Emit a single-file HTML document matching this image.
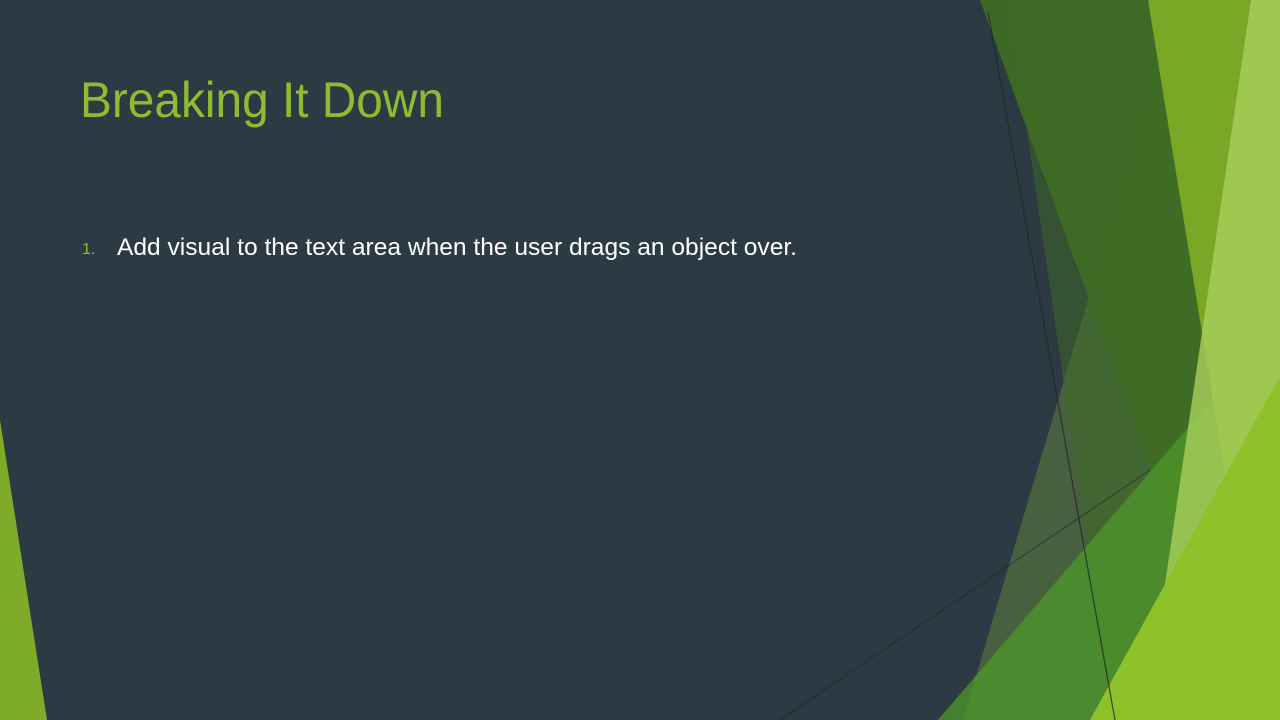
<!DOCTYPE html>
<html><head><meta charset="utf-8"><style>
html,body{margin:0;padding:0;background:#2c3a43;}
svg{display:block}
</style></head><body>
<svg width="1280" height="720" viewBox="0 0 1280 720" xmlns="http://www.w3.org/2000/svg">
<rect width="1280" height="720" fill="#2c3a43"/>
<polygon points="0,420 0,720 47,720" fill="#7fab2b"/>
<polygon points="1177,0 1280,0 1280,720 963,720" fill="#7aa83c" opacity="0.35"/>
<polygon points="980,0 1280,0 1280,720 1242,720" fill="#3f6f24" opacity="0.9"/>
<polygon points="1008,0 1280,0 1280,720 1113,720" fill="#3d6b23" opacity="0.5"/>
<polygon points="938,720 1280,320 1280,720" fill="#4f9a28" opacity="0.72"/>
<polygon points="1148,0 1280,0 1280,720 1265,720" fill="#79a826"/>
<polygon points="1251,0 1280,0 1280,720 1145,720" fill="#a6d05a" opacity="0.82"/>
<polygon points="1090,720 1280,376 1280,720" fill="#8dc22b"/>
<line x1="988" y1="12" x2="1115" y2="720" stroke="#1f2a22" stroke-width="1.2" opacity="0.8"/>
<line x1="780" y1="720" x2="1150" y2="470" stroke="#1f2a22" stroke-width="1" opacity="0.7"/>
<text x="80" y="117" font-family="Liberation Sans, sans-serif" font-size="50" fill="#8fbc2f" textLength="364" lengthAdjust="spacingAndGlyphs">Breaking It Down</text>
<text x="82" y="254" font-family="Liberation Sans, sans-serif" font-size="16" fill="#8fbc2f">1.</text>
<text x="117" y="255" font-family="Liberation Sans, sans-serif" font-size="24" fill="#ffffff" textLength="680" lengthAdjust="spacingAndGlyphs">Add visual to the text area when the user drags an object over.</text>
</svg>
</body></html>
